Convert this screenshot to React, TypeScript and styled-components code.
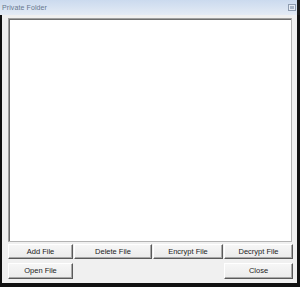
import React from "react";
import styled, { createGlobalStyle } from "styled-components";

const GlobalStyle = createGlobalStyle`
    html, body {
        margin: 0;
        padding: 0;
        background: #ffffff;
    }
    body {
        font-family: "Liberation Sans", Arial, sans-serif;
    }
`

const StyledWindow = styled.div`
    width: 300px;
    height: 287px;
    display: flex;
    flex-direction: column;
    background-color: #f0f0f0;
    overflow: hidden;
`

const TitleBar = styled.div`
    height: 15px;
    flex: none;
    display: flex;
    align-items: center;
    justify-content: space-between;
    padding: 0 1px 1px 2px;
    box-sizing: border-box;
    background: linear-gradient(#cbdaee, #e4ebf5);
    border-right: 3px solid #1a1a1a;
    color: #66778f;
    font-size: 7px;
    letter-spacing: 0.1px;
`

const TitleText = styled.span`
    padding-top: 1px;
`

const WindowBody = styled.div`
    flex: 1;
    display: flex;
    flex-direction: column;
    gap: 1px;
    padding: 3px 5px 4px 6px;
    border-left: 2px solid #111;
    border-right: 3px solid #111;
    border-bottom: 4px solid #111;
    min-height: 0;
`

const ListBox = styled.div`
    flex: 1;
    background: #ffffff;
    border-top: 1px solid #a0a0a0;
    border-left: 1px solid #a0a0a0;
    border-right: 1px solid #b4b4b4;
    border-bottom: 1px solid #b4b4b4;
    box-shadow: inset 1px 1px 0 #6e6e6e;
`

const ButtonGrid = styled.div<{ $top?: number }>`
    display: grid;
    grid-template-columns: 65px 78px 70px 69px;
    column-gap: 1px;
    margin-top: ${(props) => props.$top || 0}px;
`

const Button = styled.button<{ $col?: number; $h: number }>`
    grid-column: ${(props) => props.$col || "auto"};
    height: ${(props) => props.$h}px;
    margin: 0;
    padding: 0;
    background: linear-gradient(#f6f6f6, #ebebeb);
    border-top: 1px solid #ffffff;
    border-left: 1px solid #ffffff;
    border-right: 1px solid #5a5a5a;
    border-bottom: 1px solid #5a5a5a;
    box-shadow: inset -1px -1px 0 #a8a8a8;
    font-family: "Liberation Sans", Arial, sans-serif;
    font-size: 7.5px;
    color: #1c1c1c;
    line-height: 1;
    cursor: default;
`

const CornerIcon = () => (
    <svg width="8" height="7" viewBox="0 0 8 7">
        <rect x="0.5" y="0.5" width="7" height="6" fill="#e6ecf4" stroke="#8e9cb0" />
        <rect x="2" y="2" width="4" height="3" fill="#a8b4c6" />
    </svg>
)

const App = () => {
    return <>
        <GlobalStyle />
        <StyledWindow>
            <TitleBar>
                <TitleText>Private Folder</TitleText>
                <CornerIcon />
            </TitleBar>
            <WindowBody>
                <ListBox />
                <ButtonGrid $top={1}>
                    <Button $h={15}>Add File</Button>
                    <Button $h={15}>Delete File</Button>
                    <Button $h={15}>Encrypt File</Button>
                    <Button $h={15}>Decrypt File</Button>
                </ButtonGrid>
                <ButtonGrid $top={3}>
                    <Button $h={16} $col={1}>Open File</Button>
                    <Button $h={16} $col={4}>Close</Button>
                </ButtonGrid>
            </WindowBody>
        </StyledWindow>
    </>
}

export default App
